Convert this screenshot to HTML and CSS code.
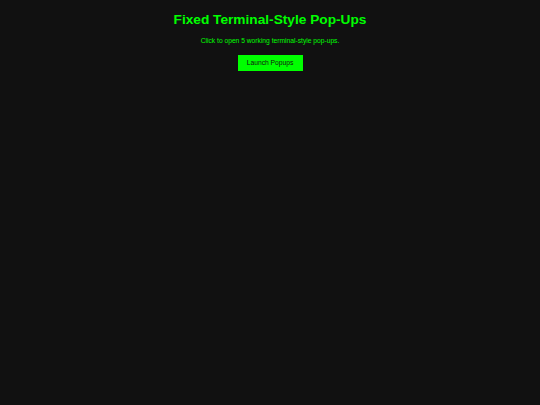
FILE: index.html
```html
<!DOCTYPE html>
<html>
<head>
<meta charset="utf-8">
<link rel="stylesheet" href="styles.css">
</head>
<body>
<main class="page">
  <h1 class="title">Fixed Terminal-Style Pop-Ups</h1>
  <p class="lead">Click to open 5 working terminal-style pop-ups.</p>
  <button class="launch">Launch Popups</button>
</main>
</body>
</html>
```
FILE: styles.css
```css
html, body {
  margin: 0;
  padding: 0;
  background: #111111;
  height: 100%;
}
body {
  font-family: "Liberation Sans", Arial, sans-serif;
  color: #00ff00;
}
.page {
  display: flex;
  flex-direction: column;
  align-items: center;
  padding-top: 12px;
}
.title {
  margin: 0;
  font-size: 13.7px;
  font-weight: bold;
  line-height: 16px;
}
.lead {
  margin: 8px 0 0;
  font-size: 6.7px;
  line-height: 9px;
}
.launch {
  box-sizing: border-box;
  margin-top: 10px;
  background: #00ff00;
  color: #111111;
  border: none;
  font-family: "Liberation Sans", Arial, sans-serif;
  font-size: 6.7px;
  line-height: 16px;
  padding: 0;
  width: 65px;
  height: 16px;
  white-space: nowrap;
  text-align: center;
  cursor: pointer;
}
```
